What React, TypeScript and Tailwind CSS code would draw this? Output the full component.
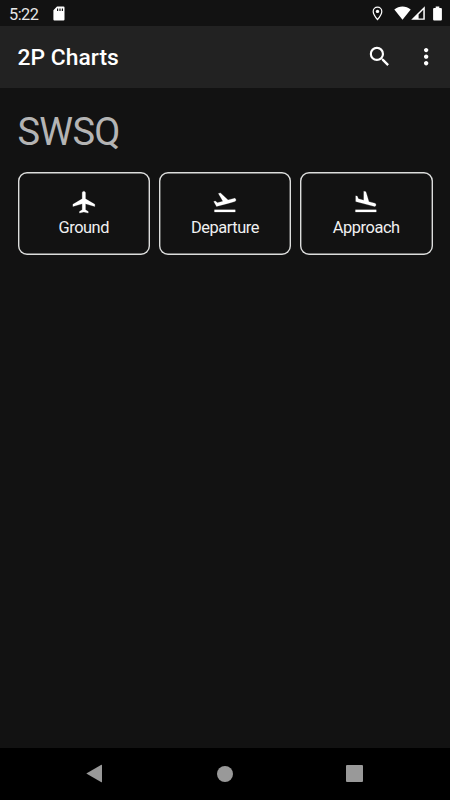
import React from "react";
import { MdSearch, MdMoreVert } from "react-icons/md";

const PLANE = "M22 16v-2l-8.5-5V3.5c0-.83-.67-1.5-1.5-1.5s-1.5.67-1.5 1.5V9L2 14v2l8.5-2.5V19L8 20.5V22l4-1 4 1v-1.5L13.5 19v-5.5L22 16z";
const TAKEOFF = "M2.5 19h19v2h-19zm19.57-9.36c-.21-.8-1.04-1.28-1.84-1.06L14.92 10l-6.9-6.43-1.93.51 4.14 7.17-4.97 1.33-1.97-1.54-1.45.39 1.82 3.16.77 1.33 1.6-.43 5.31-1.42 4.35-1.16L21 11.49c.81-.23 1.28-1.05 1.07-1.85z";
const LANDING = "M2.5 19h19v2h-19zm7.18-5.73l4.35 1.16 5.31 1.42c.8.21 1.62-.26 1.84-1.06.21-.8-.26-1.62-1.06-1.84l-5.31-1.42-2.76-9.02L10.12 2v8.28L5.15 8.95l-.93-2.32-1.45-.39v5.17l1.6.43 5.31 1.43z";

function StatusBar() {
  return (
    <div className="flex h-[26px] shrink-0 items-center pl-[9px] pr-[8px]">
      <span className="w-[31px] translate-y-[1.5px] text-[16.3px] leading-none tracking-[-0.5px] text-[#e8e8e8]">5:22</span>
      <svg viewBox="0 0 12 15" className="ml-[12.5px] h-[15px] w-[12px]" fill="currentColor">
        <path fillRule="evenodd" d="M4 .5h6.5q1 0 1 1v12q0 1-1 1H1.4q-1 0-1-1V4.2zM4 2.4v2.5h1.2V2.4zM6.4 2.4v2.5h1.2V2.4zM8.8 2.4v2.5H10V2.4z" />
      </svg>
      <div className="ml-auto flex items-center">
        <svg viewBox="0 0 11 15" className="h-[15px] w-[11px]">
          <path d="M5.5 1.1C3 1.1 1.2 3 1.2 5.4c0 3.1 4.3 8.1 4.3 8.1s4.3-5 4.3-8.1C9.8 3 8 1.1 5.5 1.1z" fill="none" stroke="currentColor" strokeWidth="1.2" />
          <circle cx="5.5" cy="5.4" r="1.7" fill="currentColor" />
        </svg>
        <svg viewBox="0 0 17 14" className="ml-[11px] h-[14px] w-[17px]" fill="currentColor">
          <path d="M.3 3.5C5-.4 12-.4 16.7 3.5L8.5 13.7z" />
        </svg>
        <svg viewBox="0 0 14 14" className="h-[14px] w-[14px]">
          <path fillRule="evenodd" d="M13.8.2v13.5H.2zM12.3 3.8L7.6 8.5v3.9h4.7z" fill="currentColor" />
        </svg>
        <svg viewBox="0 0 9 15" className="ml-[8px] h-[15px] w-[9px]" fill="currentColor">
          <path d="M2.7.5h3.6v1.4h1.6q1 0 1 1v10.6q0 1-1 1H1.1q-1 0-1-1V2.9q0-1 1-1h1.6z" />
        </svg>
      </div>
    </div>
  );
}

function ChartCard({ path, label }: { path: string; label: string }) {
  return (
    <button className="flex h-[82.5px] flex-1 flex-col items-center rounded-[9px] pt-[17px] text-white shadow-[inset_0_0_0_1.4px_#dcdddc]">
      <svg viewBox="0 0 24 24" className="size-[26.3px] -translate-x-[0.3px]" fill="currentColor" stroke="currentColor" strokeWidth="0.2">
        <path d={path} />
      </svg>
      <span className="mt-[0.5px] text-[16.4px] leading-[23px] tracking-[-0.45px] text-[#f0f0f0]">{label}</span>
    </button>
  );
}

export default function App() {
  return (
    <div className="flex h-[800px] w-[450px] flex-col overflow-hidden bg-[#121212] font-[Roboto,sans-serif] text-white">
      <StatusBar />
      <header className="flex h-[61.5px] shrink-0 items-center bg-[#222222] pl-[17.5px] pr-[11px]">
        <h1 className="translate-y-[2px] text-[22.8px] font-medium leading-none tracking-[0.05px]">2P Charts</h1>
        <MdSearch className="ml-auto size-[26.3px] -translate-y-[0.5px] translate-x-[0.5px]" />
        <MdMoreVert className="ml-[20px] size-[26.3px] -translate-y-[0.5px]" />
      </header>
      <main className="flex-1 px-[17.5px] pt-[22px]">
        <h2 className="h-[62.5px] text-[38px] leading-[44px] tracking-[-0.7px] text-[#b4b4b4]">SWSQ</h2>
        <div className="flex gap-[8.75px]">
          <ChartCard path={PLANE} label="Ground" />
          <ChartCard path={TAKEOFF} label="Departure" />
          <ChartCard path={LANDING} label="Approach" />
        </div>
      </main>
      <nav className="flex h-[52.5px] shrink-0 items-center bg-black pl-[85.5px] text-[#999999]">
        <svg viewBox="0 0 17 19" className="h-[19px] w-[17px]" fill="currentColor">
          <path d="M.3 9.5L15.4.7q.6-.2.6.5v16.6q0 .7-.6.5z" />
        </svg>
        <div className="ml-[114.5px] size-[16px] rounded-full bg-[#999999]" />
        <div className="ml-[113px] size-[17px] rounded-[1px] bg-[#999999]" />
      </nav>
    </div>
  );
}
